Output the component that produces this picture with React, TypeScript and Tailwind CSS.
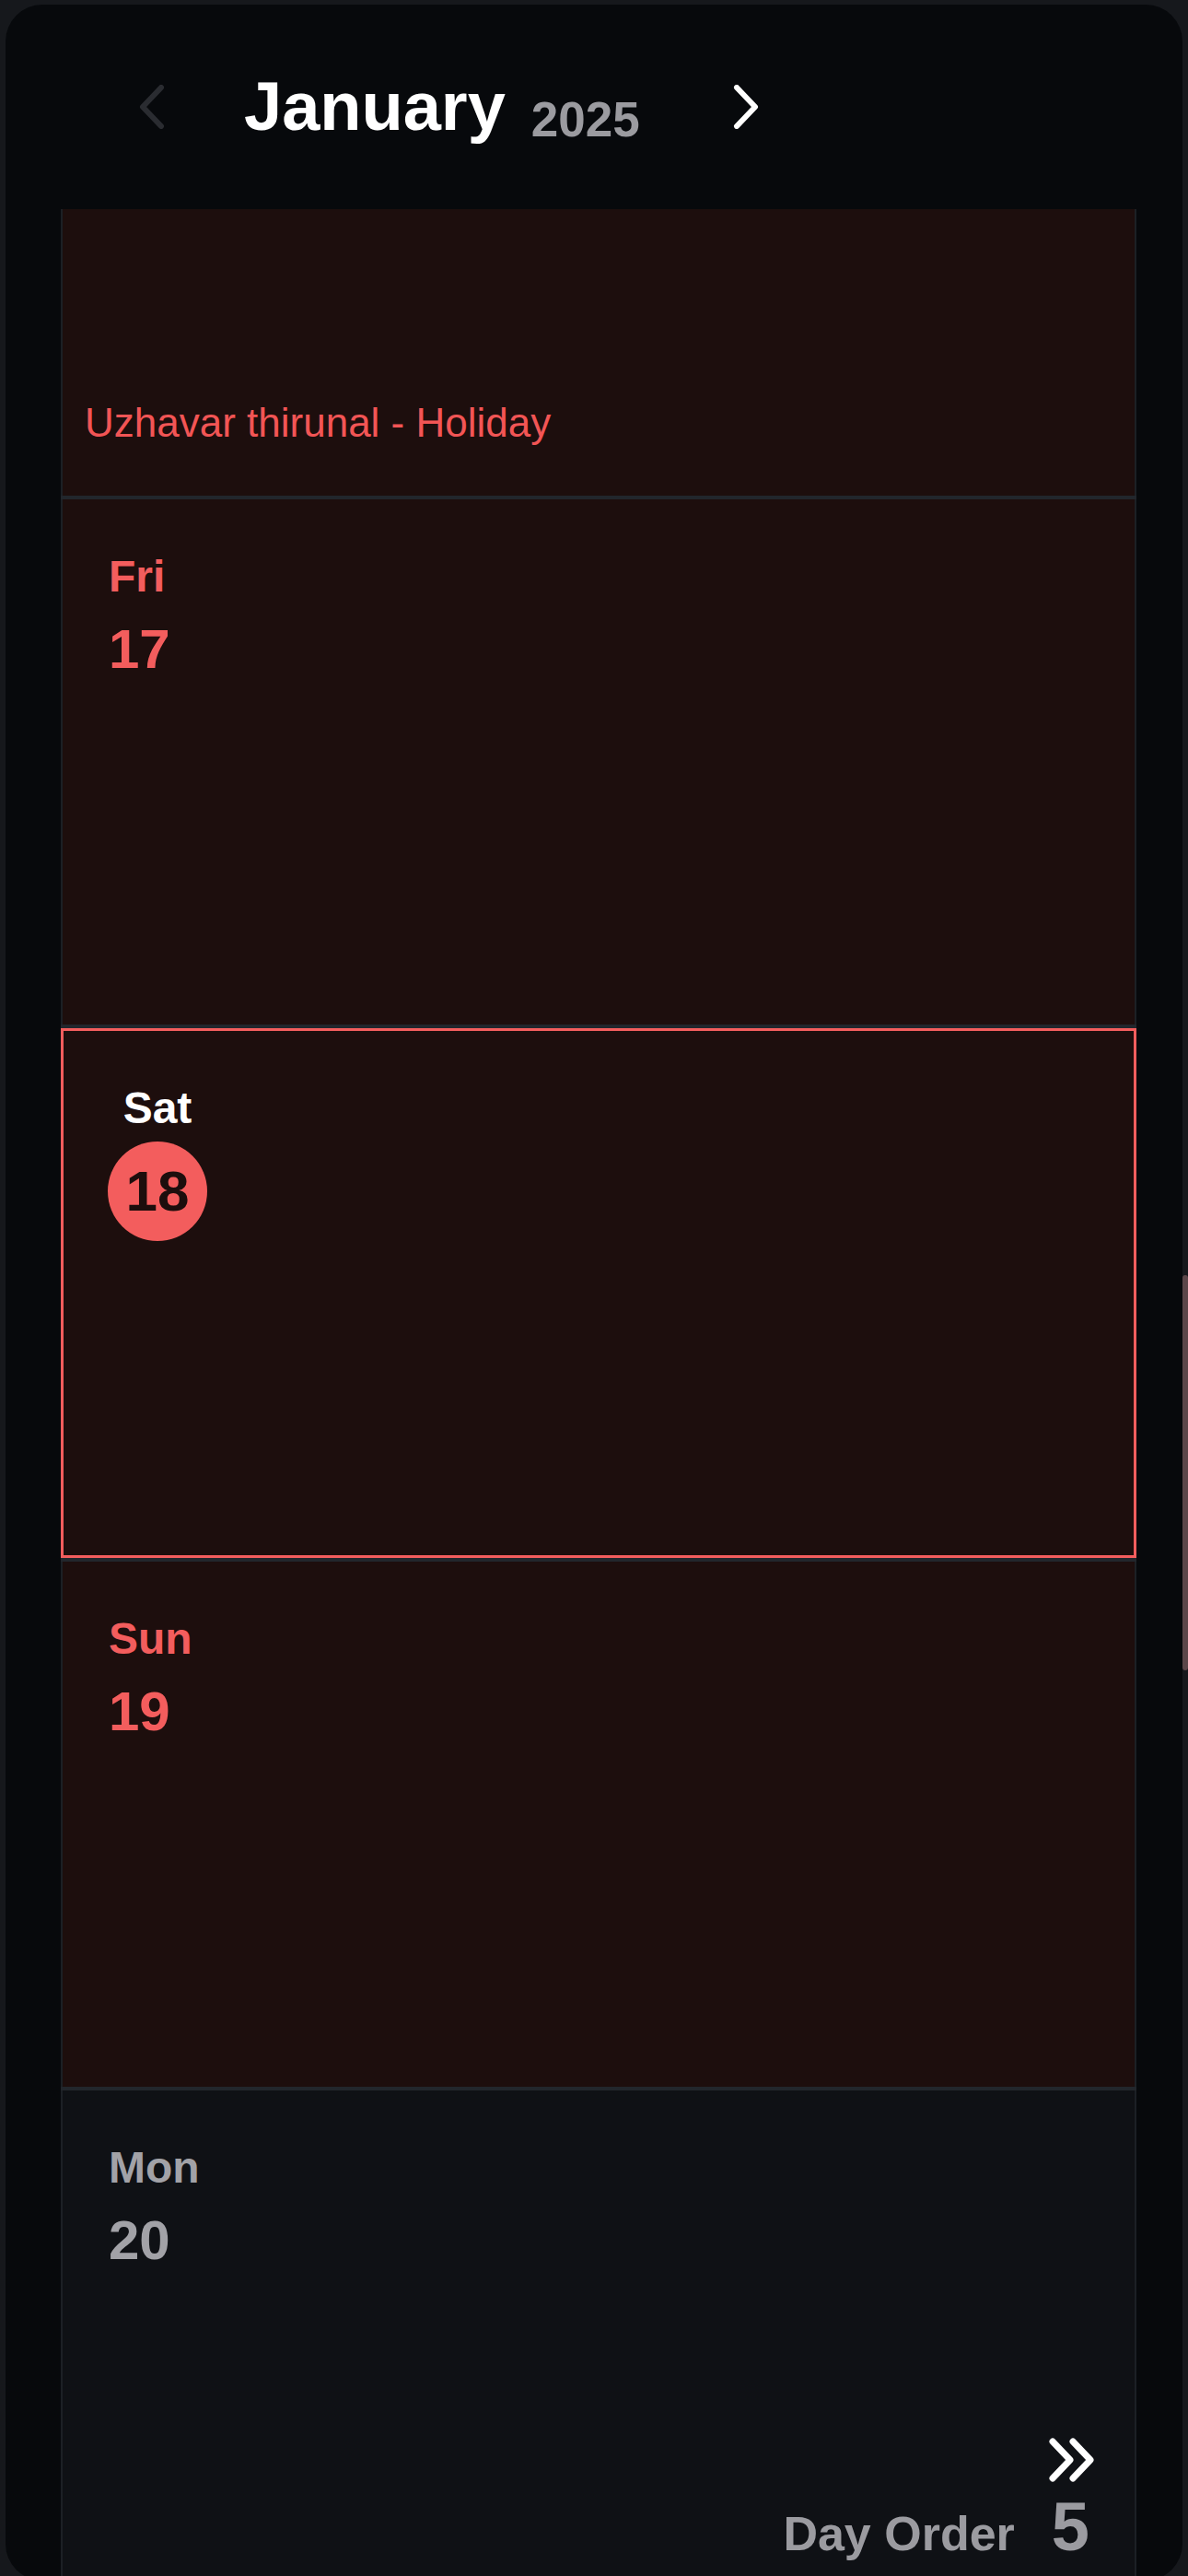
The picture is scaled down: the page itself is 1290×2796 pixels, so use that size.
import React from "react";

const font = { fontFamily: '"Liberation Sans", Arial, sans-serif' };

function Chevron(props: { dir: "left" | "right"; color: string }) {
  const pts = props.dir === "left" ? "25,3 5,24 25,45" : "5,3 25,24 5,45";
  return (
    <svg width="30" height="48" viewBox="0 0 30 48" fill="none">
      <polyline points={pts} stroke={props.color} strokeWidth="6" strokeLinecap="round" strokeLinejoin="round" />
    </svg>
  );
}

function DoubleChevron() {
  return (
    <svg width="50" height="48" viewBox="0 0 50 48" fill="none">
      <polyline points="4,4 23,24 4,44" stroke="#ffffff" strokeWidth="7" strokeLinecap="round" strokeLinejoin="round" />
      <polyline points="26,4 45,24 26,44" stroke="#ffffff" strokeWidth="7" strokeLinecap="round" strokeLinejoin="round" />
    </svg>
  );
}

function DayCard(props: { day: string; date: number }) {
  return (
    <div className="h-[570px] bg-[#1d0e0d] border-x-2 border-[#1c2025] pl-[50px] pt-[60px]">
      <div className="text-[48px] leading-none font-semibold text-[#f35d5d]">{props.day}</div>
      <div className="mt-[25px] text-[60px] leading-none font-bold text-[#f35d5d]">{props.date}</div>
    </div>
  );
}

export default function App() {
  return (
    <div className="h-[2796px] overflow-hidden bg-[#16181c] pt-[5px] px-[6px]" style={font}>
      <div className="relative h-[2796px] rounded-[40px] bg-[#07090c]">
        {/* month header */}
        <div className="flex h-[222px] items-center pl-[144px]">
          <Chevron dir="left" color="#2a2c31" />
          <div className="ml-[85px] flex items-baseline gap-[28px]">
            <span className="text-[74px] leading-none font-bold text-white">January</span>
            <span className="translate-y-[7px] text-[53px] leading-none font-semibold text-[#9b9ba0]">2025</span>
          </div>
          <div className="ml-[100px]">
            <Chevron dir="right" color="#ffffff" />
          </div>
        </div>

        {/* day list */}
        <div className="ml-[60px] w-[1168px] flex flex-col gap-[4px] bg-[#22262c]">
          <div className="h-[311px] bg-[#1d0e0d] border-x-2 border-[#1c2025] flex flex-col justify-end pl-[24px] pb-[57px]">
            <div className="text-[44px] leading-none text-[#f25555]">Uzhavar thirunal - Holiday</div>
          </div>

          <DayCard day="Fri" date={17} />

          <div className="h-[575px] bg-[#1d0e0d] border-[3px] border-[#f35d5d] pl-[48px] pt-[60px]">
            <div className="flex w-[108px] flex-col items-center">
              <div className="text-[48px] leading-none font-semibold text-white">Sat</div>
              <div className="mt-[12px] flex h-[108px] w-[108px] items-center justify-center rounded-full bg-[#f35d5d]">
                <span className="text-[62px] leading-none font-bold text-[#1d0e0d]">18</span>
              </div>
            </div>
          </div>

          <DayCard day="Sun" date={19} />

          <div className="h-[570px] bg-[#0f1115] border-x-2 border-[#1c2025] pl-[50px] pr-[49px] pt-[60px] pb-[59px] flex flex-col">
            <div className="text-[48px] leading-none font-semibold text-[#a2a2a7]">Mon</div>
            <div className="mt-[25px] text-[60px] leading-none font-bold text-[#a2a2a7]">20</div>
            <div className="mt-auto flex flex-col items-end">
              <div className="mr-[-6px]">
                <DoubleChevron />
              </div>
              <div className="mt-[12px] flex items-baseline gap-[40px]">
                <span className="text-[52px] leading-none font-bold text-[#9b9ba0]">Day Order</span>
                <span className="text-[74px] leading-none font-bold text-[#9b9ba0]">5</span>
              </div>
            </div>
          </div>
        </div>

        <div className="absolute right-[-6px] top-[1379px] h-[429px] w-[6px] rounded-full bg-[#5b4649]" />
      </div>
    </div>
  );
}
